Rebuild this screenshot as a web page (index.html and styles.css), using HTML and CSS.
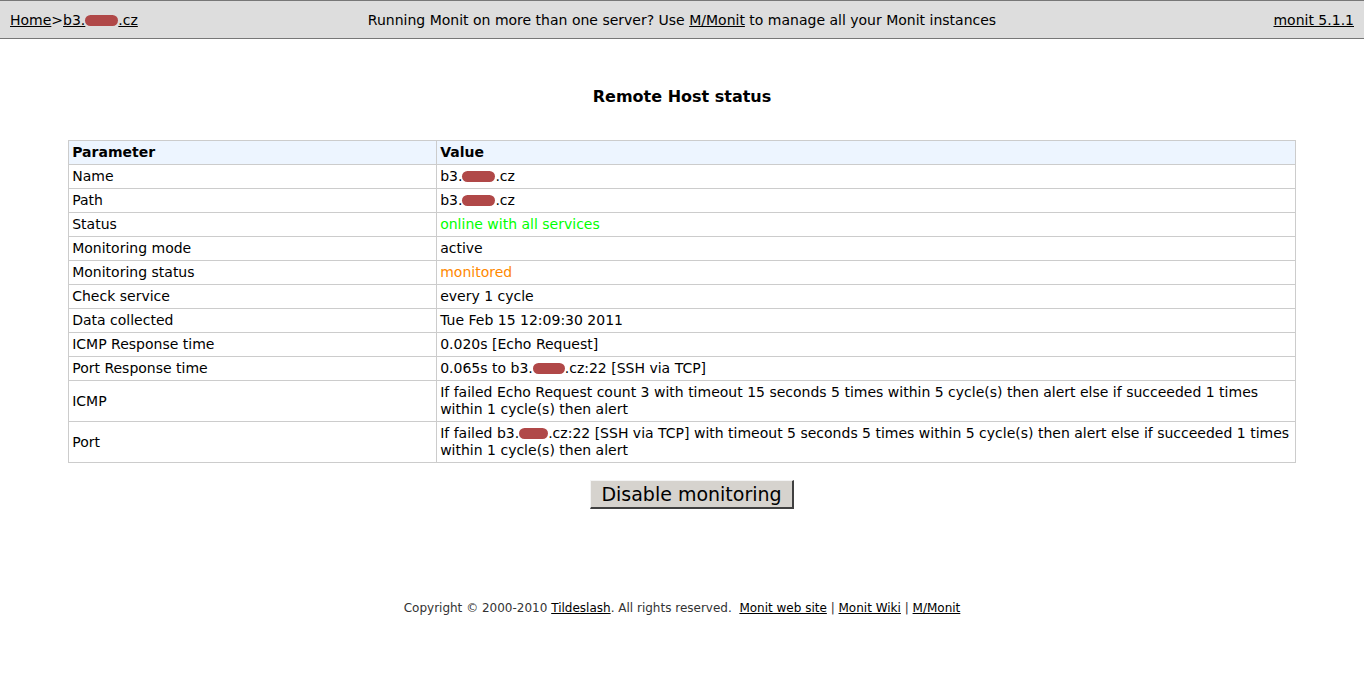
FILE: index.html
```html
<!DOCTYPE html>
<html>
<head>
<meta charset="utf-8">
<link rel="stylesheet" href="styles.css">
</head>
<body>
<div class="header">
  <div class="crumbs"><a href="#">Home</a>&gt;<a href="#">b3.<span class="blot b1"></span>.cz</a></div>
  <div class="promo">Running Monit on more than one server? Use <a href="#">M/Monit</a> to manage all your Monit instances</div>
  <div class="version"><a href="#">monit 5.1.1</a></div>
</div>
<main class="content">
  <h1 class="title">Remote Host status</h1>
  <table class="status">
    <tr class="head"><th class="pcol">Parameter</th><th>Value</th></tr>
    <tr><td>Name</td><td>b3.<span class="blot b2"></span>.cz</td></tr>
    <tr><td>Path</td><td>b3.<span class="blot b2"></span>.cz</td></tr>
    <tr><td>Status</td><td class="ok">online with all services</td></tr>
    <tr><td>Monitoring mode</td><td>active</td></tr>
    <tr><td>Monitoring status</td><td class="mon">monitored</td></tr>
    <tr><td>Check service</td><td>every 1 cycle</td></tr>
    <tr><td>Data collected</td><td>Tue Feb 15 12:09:30 2011</td></tr>
    <tr><td>ICMP Response time</td><td>0.020s [Echo Request]</td></tr>
    <tr><td>Port Response time</td><td>0.065s to b3.<span class="blot b3"></span>.cz:22 [SSH via TCP]</td></tr>
    <tr><td>ICMP</td><td>If failed Echo Request count 3 with timeout 15 seconds 5 times within 5 cycle(s) then alert else if succeeded 1 times within 1 cycle(s) then alert</td></tr>
    <tr><td>Port</td><td>If failed b3.<span class="blot b4"></span>.cz:22 [SSH via TCP] with timeout 5 seconds 5 times within 5 cycle(s) then alert else if succeeded 1 times within 1 cycle(s) then alert</td></tr>
  </table>
  <div class="actions"><button class="btn" type="button">Disable monitoring</button></div>
</main>
<footer class="footer">Copyright © 2000-2010 <a href="#">Tildeslash</a>. All rights reserved. &nbsp;<a href="#">Monit web site</a> | <a href="#">Monit Wiki</a> | <a href="#">M/Monit</a></footer>
</body>
</html>
```
FILE: styles.css
```css
html, body {
  margin: 0;
  padding: 0;
  background: #fff;
  color: #000;
  font-family: "DejaVu Sans", Verdana, sans-serif;
}
a { color: #000; text-decoration: underline; }
.header {
  display: grid;
  grid-template-columns: 1fr auto 1fr;
  align-items: center;
  background: #dddddd;
  border-top: 1px solid #777;
  border-bottom: 1px solid #777;
  box-sizing: border-box;
  height: 39px;
  padding: 0 10px;
  font-size: 14px;
}
.promo { text-align: center; }
.version { text-align: right; }
.content {
  display: flex;
  flex-direction: column;
  align-items: center;
}
.title {
  font-size: 16px;
  line-height: 19px;
  font-weight: bold;
  margin: 48px 0 34px;
}
.status {
  width: 90%;
  border-collapse: collapse;
  border: 1px solid #ccc;
  font-size: 14px;
  line-height: 17px;
}
.status th, .status td {
  border: 1px solid #ccc;
  padding: 3px 3px;
  text-align: left;
  vertical-align: middle;
}
.status th { font-weight: bold; }
.status .pcol { width: 30%; }
.head { background: #edf5ff; }
.ok { color: #00ff00; }
.mon { color: #ff8800; }
.blot {
  display: inline-block;
  height: 11px;
  background: #b04848;
  border-radius: 6px;
  vertical-align: -1px;
}
.b1 { width: 33px; }
.b2 { width: 33px; }
.b3 { width: 32px; }
.b4 { width: 29px; }
.actions { margin-top: 17px; padding-left: 20px; }
.btn {
  font-family: "DejaVu Sans", sans-serif;
  font-size: 19px;
  line-height: 22px;
  background: #d6d3ce;
  border-style: solid;
  border-color: #f4f4f4 #404040 #404040 #f4f4f4;
  border-width: 1px 2px 2px 1px;
  padding: 2px 10px;
  color: #000;
}
.footer {
  text-align: center;
  font-size: 12px;
  color: #333;
  margin-top: 92px;
}
.footer a { color: #000; }
```
